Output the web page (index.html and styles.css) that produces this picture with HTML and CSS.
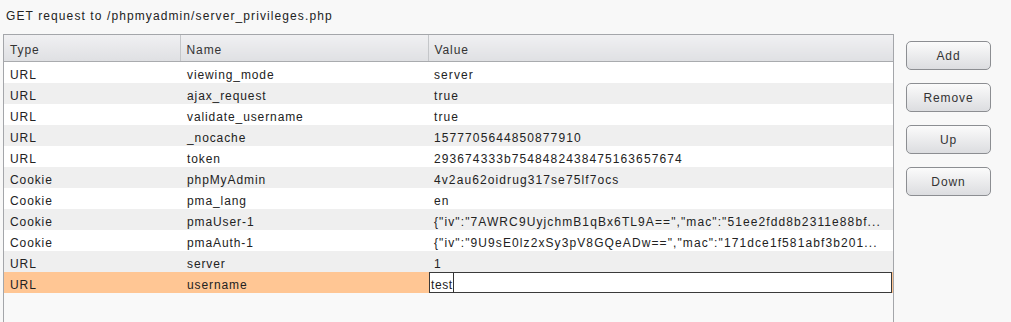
FILE: index.html
```html
<!DOCTYPE html>
<html lang="en">
<head>
  <meta charset="UTF-8">
  <title>Request parameters</title>
  <link rel="stylesheet" href="styles.css">
</head>
<body>
  <p class="caption">GET request to /phpmyadmin/server_privileges.php</p>

  <div class="editor">
    <!-- Parameter table -->
    <div class="grid-panel">
      <table class="params">
        <colgroup>
          <col class="col-type">
          <col class="col-name">
          <col class="col-value">
        </colgroup>
        <thead>
          <tr>
            <th>Type</th>
            <th>Name</th>
            <th>Value</th>
          </tr>
        </thead>
        <tbody>
          <tr><td>URL</td><td>viewing_mode</td><td>server</td></tr>
          <tr><td>URL</td><td>ajax_request</td><td>true</td></tr>
          <tr><td>URL</td><td>validate_username</td><td>true</td></tr>
          <tr><td>URL</td><td>_nocache</td><td>1577705644850877910</td></tr>
          <tr><td>URL</td><td>token</td><td>293674333b7548482438475163657674</td></tr>
          <tr><td>Cookie</td><td>phpMyAdmin</td><td>4v2au62oidrug317se75lf7ocs</td></tr>
          <tr><td>Cookie</td><td>pma_lang</td><td>en</td></tr>
          <tr><td>Cookie</td><td>pmaUser-1</td><td>{"iv":"7AWRC9UyjchmB1qBx6TL9A==","mac":"51ee2fdd8b2311e88bf...</td></tr>
          <tr><td>Cookie</td><td>pmaAuth-1</td><td>{"iv":"9U9sE0lz2xSy3pV8GQeADw==","mac":"171dce1f581abf3b201...</td></tr>
          <tr><td>URL</td><td>server</td><td>1</td></tr>
          <tr class="selected">
            <td>URL</td><td>username</td>
            <td class="editing"><div class="edit-box"><span class="typed">test</span></div></td>
          </tr>
        </tbody>
      </table>
    </div>

    <!-- Row actions -->
    <div class="actions">
      <button class="action-button">Add</button>
      <button class="action-button">Remove</button>
      <button class="action-button">Up</button>
      <button class="action-button">Down</button>
    </div>
  </div>
</body>
</html>
```

FILE: styles.css
```css
body {
  margin: 0;
  font-family: "Liberation Sans", Arial, sans-serif;
  font-size: 12px;
  letter-spacing: 0.9px;
  color: #222;
  background-color: #f8f8f8;
  overflow: hidden;
}
.caption {
  margin: 0;
  padding: 9px 0 0 6px;
  height: 34px;
  line-height: 15px;
  letter-spacing: 1.1px;
  box-sizing: border-box;
}
.editor {
  display: flex;
  align-items: flex-start;
  padding-left: 3px;
}
.grid-panel {
  width: 889px;
  height: 300px;
  border: 1px solid #a4a6aa;
  border-bottom: none;
  background-color: #f9f9f9;
}
.params {
  width: 100%;
  border-collapse: collapse;
  table-layout: fixed;
}
.col-type {
  width: 176px;
}
.col-name {
  width: 248px;
}
.params th {
  padding: 8px 0 4px 6px;
  line-height: 14px;
  text-align: left;
  font-weight: normal;
  color: #333;
  background: linear-gradient(#f0f0f2, #dfe0e3);
  border-bottom: 1px solid #a9abae;
  border-right: 1px solid #c4c6c9;
}
.params th:last-child {
  border-right: none;
}
.params td {
  padding: 6px 0 1px 6px;
  line-height: 14px;
  white-space: nowrap;
  overflow: hidden;
}
.params td:nth-child(2) {
  padding-left: 7px;
}
.params td:nth-child(3) {
  letter-spacing: 1.1px;
}
.params tbody tr:nth-child(odd) {
  background-color: #ffffff;
}
.params tbody tr:nth-child(even) {
  background-color: #efefef;
}
.params tbody tr.selected {
  background-color: #ffc694;
}
.params td.editing {
  padding: 0 1px 0 1px;
}
.edit-box {
  height: 14px;
  padding: 5px 0 0 1px;
  line-height: 14px;
  border: 1px solid #3a3a3a;
  background-color: #fff;
  letter-spacing: 0.6px;
}
.typed {
  padding: 5px 0 2px;
  border-right: 1px solid #333;
}
.actions {
  display: flex;
  flex-direction: column;
  gap: 13px;
  margin: 7px 0 0 12px;
}
.action-button {
  width: 85px;
  height: 29px;
  padding: 0;
  font-family: "Liberation Sans", Arial, sans-serif;
  font-size: 12px;
  letter-spacing: 0.9px;
  color: #333;
  border: 1px solid #8c8e92;
  border-radius: 5px;
  background: linear-gradient(#fbfbfb, #dcdde0);
}
```
